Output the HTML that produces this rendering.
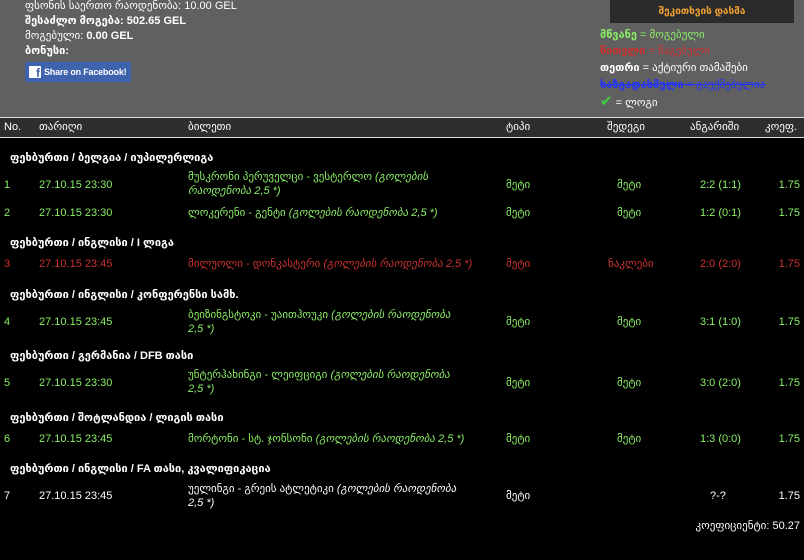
<!DOCTYPE html>
<html><head><meta charset="utf-8"><style>
*{margin:0;padding:0;box-sizing:border-box}
body{width:804px;height:560px;background:#000;overflow:hidden;position:relative;font-family:"Liberation Sans","DejaVu Sans",sans-serif;font-size:11px;color:#fff}
.a{position:absolute;white-space:nowrap;line-height:14px}
#top{position:absolute;left:0;top:0;width:804px;height:117px;background:#606060}
#hdr{position:absolute;left:0;top:117px;width:804px;height:21px;background:#2e2e2e;border-top:1px solid #ddd;border-bottom:1px solid #ddd}
.g{color:#8aee66}.r{color:#cc3030}.w{color:#fff}
.b{font-weight:bold}
.i{font-style:italic}
.t{width:280px;white-space:normal}
.rt{text-align:right}
</style></head><body>
<div id="top"></div>
<div class="a" style="left:25px;top:-1px">ფსონის საერთო რაოდენობა: 10.00 GEL</div>
<div class="a b" style="left:25px;top:14px">შესაძლო მოგება: 502.65 GEL</div>
<div class="a" style="left:25px;top:29px">მოგებული: <b>0.00 GEL</b></div>
<div class="a b" style="left:25px;top:44px">ბონუსი:</div>
<div class="a" style="left:25px;top:62px;width:106px;height:20px;background:#3f62ad;border-radius:2px;font-size:9px;font-weight:bold;line-height:20px;padding-left:19px;overflow:hidden;letter-spacing:-0.2px">Share on Facebook!</div>
<div class="a" style="left:29px;top:66px;width:12px;height:12px;background:#fff;border-radius:1px;color:#3f62ad;font-weight:bold;font-size:12px;line-height:14px;text-align:right;padding-right:1px">f</div>

<div class="a" style="left:610px;top:0;width:184px;height:23px;background:#2b2b2b;color:#f0a030;text-align:center;line-height:23px;font-size:10px;font-weight:bold">შეკითხვის დასმა</div>
<div class="a g" style="left:600px;top:28px"><b>მწვანე</b> = მოგებული</div>
<div class="a r" style="left:600px;top:44px"><b>წითელი</b> = წაგებული</div>
<div class="a w" style="left:600px;top:61px"><b>თეთრი</b> = აქტიური თამაშები</div>
<div class="a" style="left:600px;top:78px;color:#2233ff;text-decoration:line-through"><b>ხაზგადასმული</b> = გაუქმებულია</div>
<div class="a" style="left:600px;top:95px"><span style="color:#3ecf3e;font-size:15px;font-weight:bold">✔</span> = ლოგი</div>

<div id="hdr"></div>
<div class="a" style="left:4px;top:120px">No.</div>
<div class="a" style="left:39px;top:120px">თარიღი</div>
<div class="a" style="left:188px;top:120px">ბილეთი</div>
<div class="a" style="left:506px;top:120px">ტიპი</div>
<div class="a" style="left:607px;top:120px">შედეგი</div>
<div class="a" style="left:690px;top:120px">ანგარიში</div>
<div class="a" style="left:765px;top:120px">კოეფ.</div>

<div class="a b" style="left:10px;top:151px">ფეხბურთი / ბელგია / იუპილერლიგა</div>
<div class="a g" style="left:4px;top:178px">1</div><div class="a g" style="left:39px;top:178px">27.10.15 23:30</div>
<div class="a g t" style="left:188px;top:170px">მუსკრონი პერუველცი - ვესტერლო <i>(გოლების რაოდენობა 2,5 *)</i></div>
<div class="a g" style="left:506px;top:178px">მეტი</div><div class="a g" style="left:617px;top:178px">მეტი</div><div class="a g" style="left:700px;top:178px">2:2 (1:1)</div><div class="a g rt" style="left:760px;top:178px;width:40px">1.75</div>

<div class="a g" style="left:4px;top:206px">2</div><div class="a g" style="left:39px;top:206px">27.10.15 23:30</div>
<div class="a g" style="left:188px;top:206px">ლოკერენი - გენტი <i>(გოლების რაოდენობა 2,5 *)</i></div>
<div class="a g" style="left:506px;top:206px">მეტი</div><div class="a g" style="left:617px;top:206px">მეტი</div><div class="a g" style="left:700px;top:206px">1:2 (0:1)</div><div class="a g rt" style="left:760px;top:206px;width:40px">1.75</div>

<div class="a b" style="left:10px;top:236px">ფეხბურთი / ინგლისი / I ლიგა</div>
<div class="a r" style="left:4px;top:257px">3</div><div class="a r" style="left:39px;top:257px">27.10.15 23:45</div>
<div class="a r" style="left:188px;top:257px">მილუოლი - დონკასტერი <i>(გოლების რაოდენობა 2,5 *)</i></div>
<div class="a r" style="left:506px;top:257px">მეტი</div><div class="a r" style="left:608px;top:257px">ნაკლები</div><div class="a r" style="left:700px;top:257px">2:0 (2:0)</div><div class="a r rt" style="left:760px;top:257px;width:40px">1.75</div>

<div class="a b" style="left:10px;top:288px">ფეხბურთი / ინგლისი / კონფერენსი სამხ.</div>
<div class="a g" style="left:4px;top:315px">4</div><div class="a g" style="left:39px;top:315px">27.10.15 23:45</div>
<div class="a g t" style="left:188px;top:308px">ბეიზინგსტოკი - უაითჰოუკი <i>(გოლების რაოდენობა 2,5 *)</i></div>
<div class="a g" style="left:506px;top:315px">მეტი</div><div class="a g" style="left:617px;top:315px">მეტი</div><div class="a g" style="left:700px;top:315px">3:1 (1:0)</div><div class="a g rt" style="left:760px;top:315px;width:40px">1.75</div>

<div class="a b" style="left:10px;top:349px">ფეხბურთი / გერმანია / DFB თასი</div>
<div class="a g" style="left:4px;top:376px">5</div><div class="a g" style="left:39px;top:376px">27.10.15 23:30</div>
<div class="a g t" style="left:188px;top:368px">უნტერჰახინგი - ლეიფციგი <i>(გოლების რაოდენობა 2,5 *)</i></div>
<div class="a g" style="left:506px;top:376px">მეტი</div><div class="a g" style="left:617px;top:376px">მეტი</div><div class="a g" style="left:700px;top:376px">3:0 (2:0)</div><div class="a g rt" style="left:760px;top:376px;width:40px">1.75</div>

<div class="a b" style="left:10px;top:411px">ფეხბურთი / შოტლანდია / ლიგის თასი</div>
<div class="a g" style="left:4px;top:432px">6</div><div class="a g" style="left:39px;top:432px">27.10.15 23:45</div>
<div class="a g" style="left:188px;top:432px">მორტონი - სტ. ჯონსონი <i>(გოლების რაოდენობა 2,5 *)</i></div>
<div class="a g" style="left:506px;top:432px">მეტი</div><div class="a g" style="left:617px;top:432px">მეტი</div><div class="a g" style="left:700px;top:432px">1:3 (0:0)</div><div class="a g rt" style="left:760px;top:432px;width:40px">1.75</div>

<div class="a b" style="left:10px;top:462px">ფეხბურთი / ინგლისი / FA თასი, კვალიფიკაცია</div>
<div class="a" style="left:4px;top:489px">7</div><div class="a" style="left:39px;top:489px">27.10.15 23:45</div>
<div class="a t" style="left:188px;top:482px">უელინგი - გრეის ატლეტიკი <i>(გოლების რაოდენობა 2,5 *)</i></div>
<div class="a" style="left:506px;top:489px">მეტი</div><div class="a" style="left:710px;top:489px">?-?</div><div class="a rt" style="left:760px;top:489px;width:40px">1.75</div>

<div class="a rt" style="left:600px;top:519px;width:200px">კოეფიციენტი: 50.27</div>
</body></html>
